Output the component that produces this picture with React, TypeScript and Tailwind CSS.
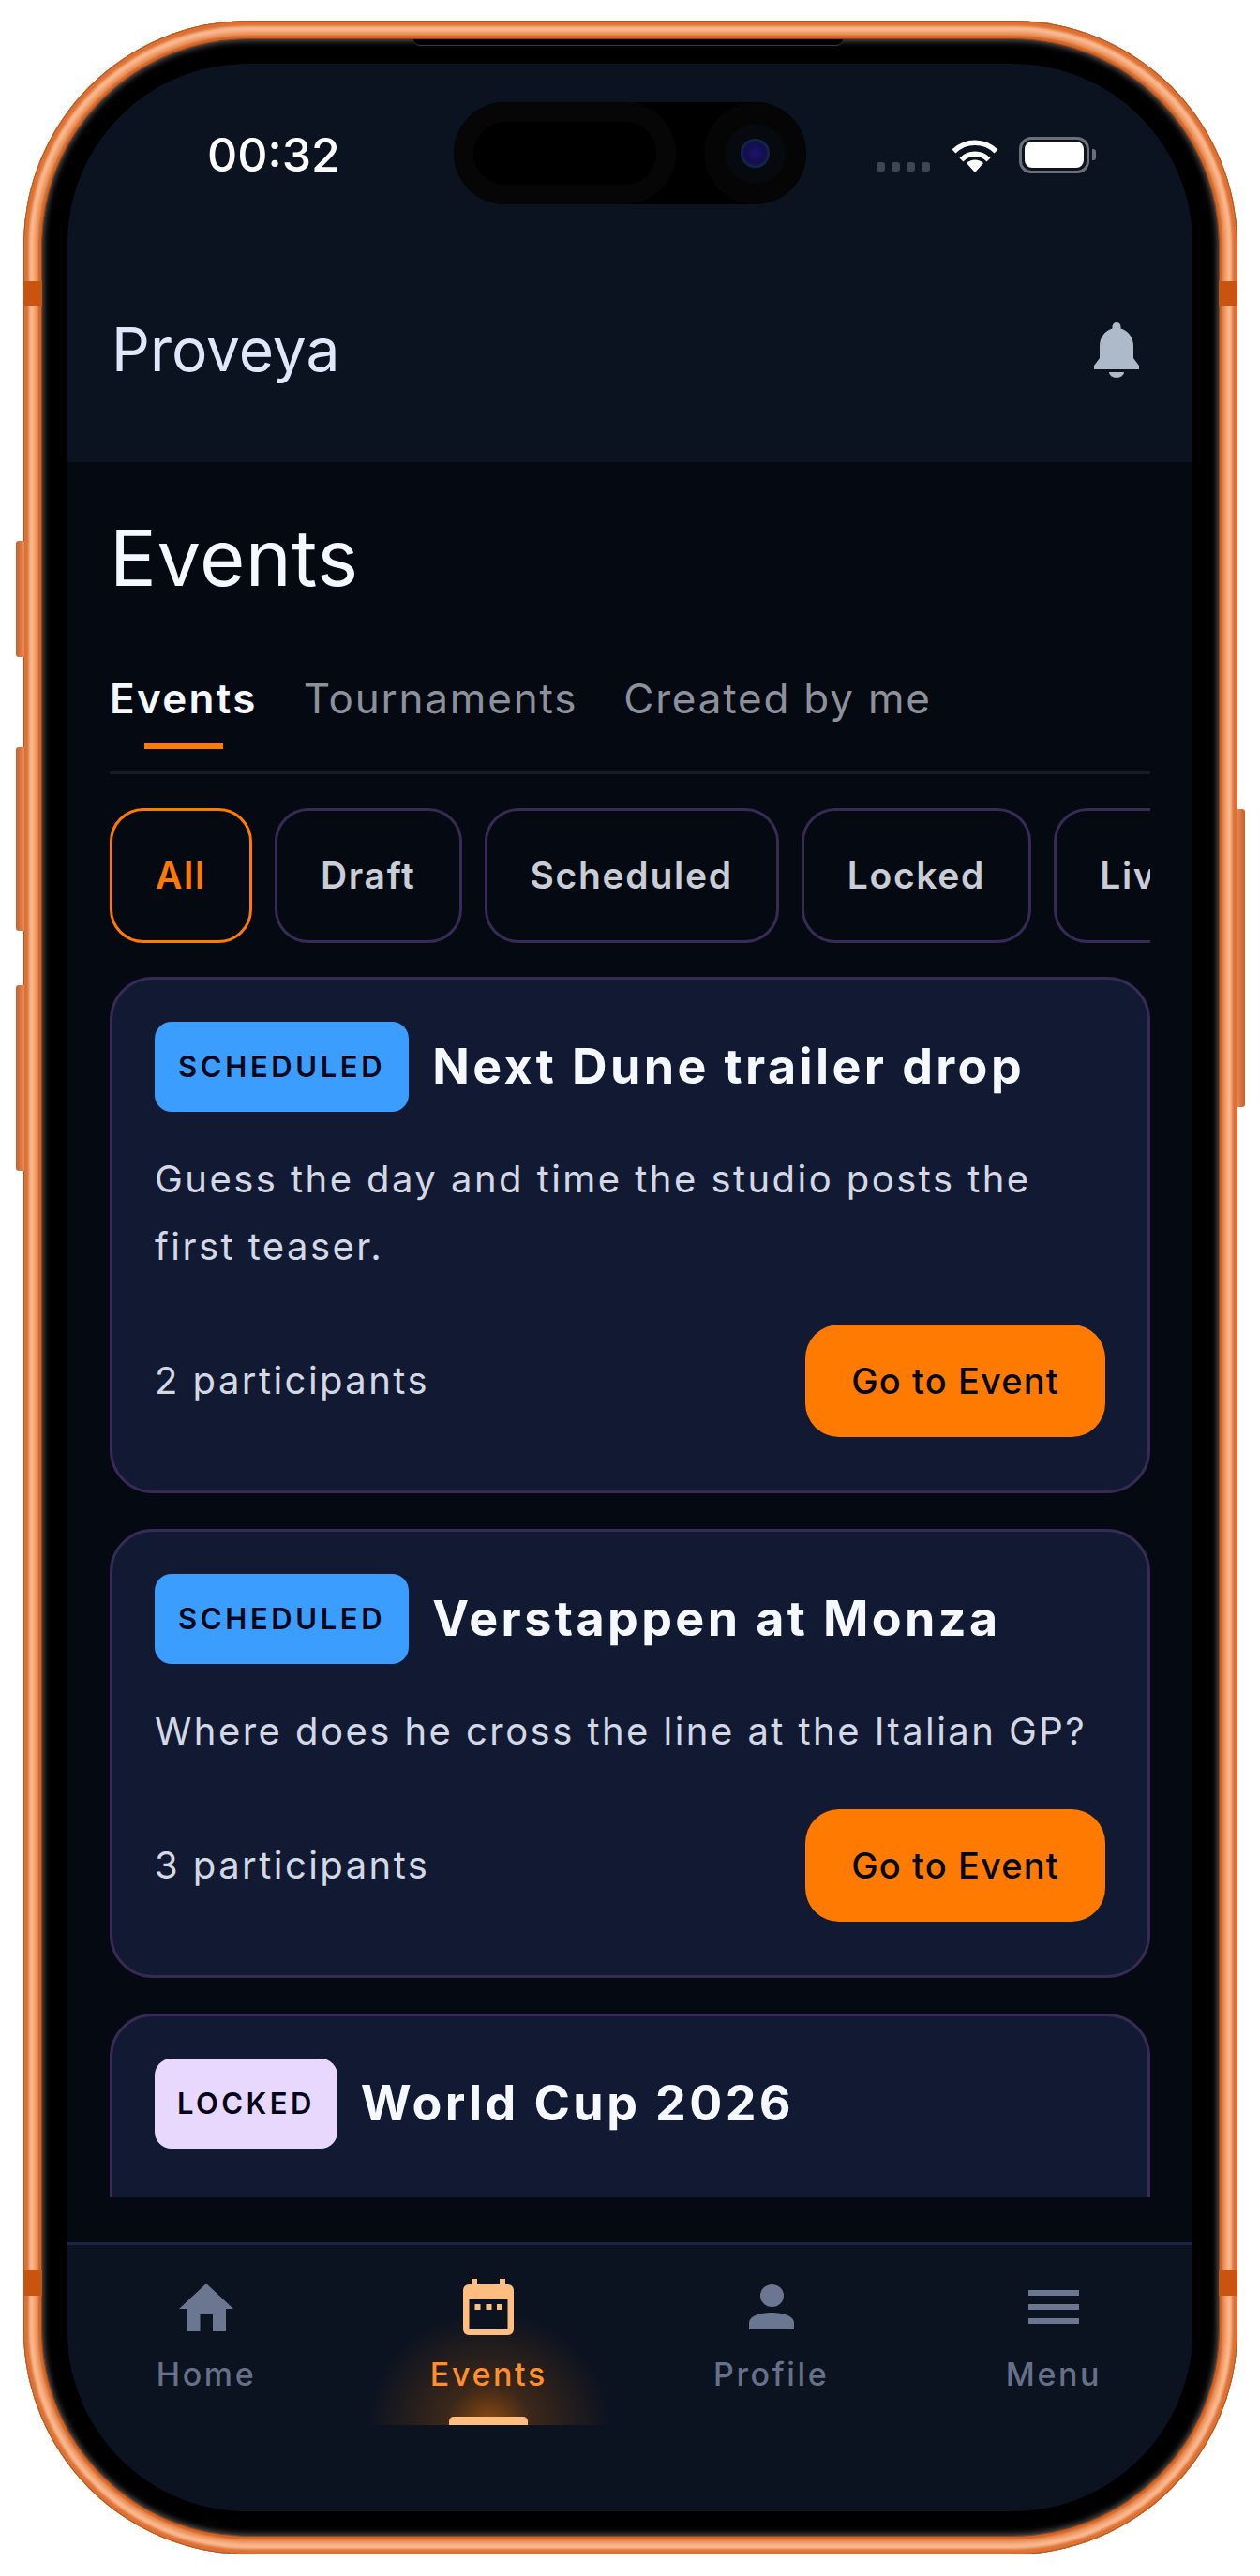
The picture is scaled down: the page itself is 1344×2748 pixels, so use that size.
import React from 'react';

const chips = ['All', 'Draft', 'Scheduled', 'Locked', 'Live'];

interface EventCard {
  status: string;
  statusClass: string;
  title: string;
  description?: string;
  participants?: string;
}

const events: EventCard[] = [
  {
    status: 'SCHEDULED',
    statusClass: 'bg-[#3b9eff] px-[25px] tracking-[3.600px]',
    title: 'Next Dune trailer drop',
    description: 'Guess the day and time the studio posts the first teaser.',
    participants: '2 participants',
  },
  {
    status: 'SCHEDULED',
    statusClass: 'bg-[#3b9eff] px-[25px] tracking-[3.600px]',
    title: 'Verstappen at Monza',
    description: 'Where does he cross the line at the Italian GP?',
    participants: '3 participants',
  },
  {
    status: 'LOCKED',
    statusClass: 'bg-[#e9d8fd] px-[24px] tracking-[3.400px]',
    title: 'World Cup 2026',
  },
];

function BellIcon() {
  return (
    <svg viewBox="0 0 48 59" className="h-[59px] w-[48px] fill-[#aeb9c9]">
      <path d="M24 0a4.5 4.5 0 0 1 4.5 4.5v2C36 9 42 15 42 25v13l6 8v4H0v-4l6-8V25C6 15 12 9 19.5 6.5v-2A4.5 4.5 0 0 1 24 0Z" />
      <path d="M16 53h16a8 6 0 0 1-16 0Z" />
    </svg>
  );
}

function WifiIcon() {
  return (
    <svg viewBox="0 0 50 37" className="h-[37px] w-[50px]" fill="none" stroke="#fff" strokeWidth="5.5">
      <path d="M2.5 14.5a32 32 0 0 1 45 0" />
      <path d="M10.5 23.5a20 20 0 0 1 29 0" />
      <path d="M25 37l-9-10a13 13 0 0 1 18 0Z" fill="#fff" stroke="none" />
    </svg>
  );
}

function HomeIcon() {
  return (
    <svg viewBox="0 0 58 51" className="h-[51px] w-[58px] fill-[#6b7690]">
      <path fillRule="evenodd" d="M29 0l29 27h-8v24H36V33H22.500v18H8V27H0Z" />
    </svg>
  );
}

function CalendarIcon() {
  return (
    <svg viewBox="0 0 54 60" className="h-[60px] w-[54px]">
      <path
        fill="#ffbd80"
        d="M9 0h6v6h24V0h6v6h3a6 6 0 0 1 6 6v42a6 6 0 0 1-6 6H6a6 6 0 0 1-6-6V12a6 6 0 0 1 6-6h3Z"
      />
      <rect x="6.500" y="21" width="41" height="33" rx="1" fill="#0c1320" />
      <rect x="12.500" y="27" width="6" height="6" fill="#ffbd80" />
      <rect x="24.500" y="27" width="6" height="6" fill="#ffbd80" />
      <rect x="36" y="27" width="6" height="6" fill="#ffbd80" />
    </svg>
  );
}

function ProfileIcon() {
  return (
    <svg viewBox="0 0 48 48" className="h-[48px] w-[48px] fill-[#6b7690]">
      <ellipse cx="24.500" cy="12" rx="12.500" ry="12" />
      <path d="M0 48v-7c0-7 11-11 24-11s24 4 24 11v7Z" />
    </svg>
  );
}

function MenuIcon() {
  return (
    <svg viewBox="0 0 54 36" className="h-[36px] w-[54px] fill-[#6b7690]">
      <rect y="0" width="54" height="6" />
      <rect y="15" width="54" height="6" />
      <rect y="30" width="54" height="6" />
    </svg>
  );
}

export default function App() {
  return (
    <div className="h-[2748px] overflow-hidden bg-white pl-[25px] pt-[22px] [font-family:Inter,sans-serif]">
      {/* Phone frame */}
      <div className="relative h-[2703px] w-[1295px] rounded-[240px] bg-[#e07f44] p-[20px] shadow-[inset_0_0_0_1px_#b8571f,inset_0_0_3px_6px_#dd7033,inset_0_0_4px_12px_#fbbd95,inset_0_0_2px_16px_#e88a50,inset_0_0_0_19px_#cf6428,inset_0_0_0_20px_#9c3e0e]">
        {/* Side buttons */}
        <div className="absolute left-[-8px] top-[555px] h-[124px] w-[9px] rounded-l-[3px] bg-gradient-to-r from-[#c95f28] to-[#e98a56]" />
        <div className="absolute left-[-8px] top-[775px] h-[196px] w-[9px] rounded-l-[3px] bg-gradient-to-r from-[#c95f28] to-[#e98a56]" />
        <div className="absolute left-[-8px] top-[1029px] h-[198px] w-[9px] rounded-l-[3px] bg-gradient-to-r from-[#c95f28] to-[#e98a56]" />
        <div className="absolute right-[-8px] top-[841px] h-[318px] w-[9px] rounded-r-[3px] bg-gradient-to-l from-[#c95f28] to-[#e98a56]" />
        {/* Antenna bands */}
        <div className="absolute left-0 top-[278px] h-[26px] w-[20px] bg-[#c9540f]" />
        <div className="absolute right-0 top-[278px] h-[26px] w-[20px] bg-[#c9540f]" />
        <div className="absolute bottom-[276px] left-0 h-[27px] w-[20px] bg-[#c9540f]" />
        <div className="absolute bottom-[276px] right-0 h-[27px] w-[20px] bg-[#c9540f]" />

        {/* Bezel */}
        <div className="relative h-full w-full rounded-[220px] bg-black pb-[26px] pl-[27px] pr-[28px] pt-[26px] shadow-[inset_0_0_7px_1px_rgba(170,170,170,0.6)]">
          <div className="absolute left-[396px] top-0 h-[7px] w-[458px] rounded-b-[8px] border-b border-[#3a3d40] bg-black" />

          {/* Screen */}
          <div className="relative flex h-full flex-col overflow-hidden rounded-[192px] bg-[#050912]">
            {/* Dynamic island */}
            <div className="absolute left-[412px] top-[41px] h-[109px] w-[376px] rounded-[55px] bg-black">
              <div className="absolute left-0 top-0 flex h-full w-[237px] items-center justify-center rounded-[55px] bg-[#060606]">
                <div className="h-[67px] w-[195px] rounded-[34px] bg-black" />
              </div>
              <div className="absolute right-0 top-0 flex h-full w-[109px] items-center justify-center rounded-full bg-[#050505]">
                <div className="flex h-[64px] w-[64px] items-center justify-center rounded-full bg-[#06090d]">
                  <div className="h-[31px] w-[31px] rounded-full bg-[radial-gradient(circle,#1c1470_0%,#140d4a_50%,#0d3a4a_78%,#06090d_100%)]" />
                </div>
              </div>
            </div>

            <header className="h-[425px] shrink-0 bg-[#0c1320] pt-[77px]">
              {/* Status bar */}
              <div className="flex h-[40px] items-center pl-[149px] pr-[103px]">
                <span className="text-[50px] font-medium leading-[40px] text-white">00:32</span>
                <div className="ml-auto flex items-center">
                  <div className="mr-[23px] mt-[26px] flex gap-[7px]">
                    <span className="h-[10px] w-[9px] rounded-[3px] bg-[#3f4653]" />
                    <span className="h-[10px] w-[9px] rounded-[3px] bg-[#3f4653]" />
                    <span className="h-[10px] w-[9px] rounded-[3px] bg-[#3f4653]" />
                    <span className="h-[10px] w-[9px] rounded-[3px] bg-[#3f4653]" />
                  </div>
                  <WifiIcon />
                  <div className="ml-[22px] flex h-[39px] w-[75px] items-center justify-center rounded-[13px] border-[3px] border-[#6b7078]">
                    <div className="h-[28px] w-[63px] rounded-[8px] bg-white" />
                  </div>
                  <div className="ml-[3px] h-[12px] w-[4px] rounded-r-[3px] bg-[#6b7078]" />
                </div>
              </div>
              {/* App bar */}
              <div className="mt-[153px] flex items-center justify-between pl-[47px] pr-[57px]">
                <span className="text-[64px] font-normal leading-[70px] text-[#dfe7fb]">Proveya</span>
                <BellIcon />
              </div>
            </header>

            <main className="flex min-h-0 flex-1 flex-col px-[45px] pb-[48px] pt-[52px]">
              <h1 className="text-[83px] font-normal leading-[100px] tracking-[0.5px] text-[#f5f8ff]">Events</h1>

              {/* Tabs */}
              <div className="mt-[70px] flex gap-[49px] border-b-[3px] border-[#171b25] pb-[48px] text-[44px] leading-[60px] tracking-[1.800px]">
                <div className="relative font-semibold tracking-[2.300px] text-[#f5f8ff]">
                  Events
                  <div className="absolute left-[37px] top-[78px] h-[6px] w-[84px] bg-[#ff7a00]" />
                </div>
                <div className="text-[#8d919c]">Tournaments</div>
                <div className="text-[#8d919c]">Created by me</div>
              </div>

              {/* Filter chips */}
              <div className="mt-[36px] flex shrink-0 gap-[24px] overflow-hidden">
                {chips.map((chip, i) => (
                  <div
                    key={chip}
                    className={
                      i === 0
                        ? 'flex h-[144px] shrink-0 items-center rounded-[36px] border-[3px] border-[#ff7a00] px-[46px] text-[39px] font-semibold tracking-[1.700px] text-[#ff7a00]'
                        : 'flex h-[144px] shrink-0 items-center rounded-[36px] border-[3px] border-[#372b55] px-[46px] text-[39px] font-semibold tracking-[1.700px] text-[#c9cdd6]'
                    }
                  >
                    {chip}
                  </div>
                ))}
              </div>

              {/* Event cards */}
              <div className="mt-[36px] flex min-h-0 flex-1 flex-col gap-[38px] overflow-hidden">
                {events.map(event => (
                  <div
                    key={event.title}
                    className={
                      event.description
                        ? 'shrink-0 rounded-[46px] border-[3px] border-[#372b55] bg-[#121a33] px-[45px] pb-[57px] pt-[45px]'
                        : 'min-h-[400px] shrink-0 rounded-[46px] border-[3px] border-[#372b55] bg-[#121a33] px-[45px] pb-[57px] pt-[45px]'
                    }
                  >
                    <div className="flex items-center gap-[25px]">
                      <span
                        className={`flex h-[96px] items-center rounded-[18px] text-[31px] font-semibold text-[#020617] ${event.statusClass}`}
                      >
                        {event.status}
                      </span>
                      <span className="text-[52px] font-bold leading-[64px] tracking-[3.400px] text-[#f5f8ff]">
                        {event.title}
                      </span>
                    </div>
                    {event.description && (
                      <p className="mt-[36px] text-[40px] leading-[72px] tracking-[2.450px] text-[#d3d8e4]">
                        {event.description}
                      </p>
                    )}
                    {event.participants && (
                      <div className="mt-[47px] flex items-center justify-between">
                        <span className="text-[40px] tracking-[2.450px] text-[#d3d8e4]">{event.participants}</span>
                        <button className="flex h-[120px] w-[320px] items-center justify-center rounded-[36px] bg-[#ff7a00] text-[38px] font-medium tracking-[1.100px] text-[#020617]">
                          Go to Event
                        </button>
                      </div>
                    )}
                  </div>
                ))}
              </div>
            </main>

            {/* Bottom navigation */}
            <nav className="flex h-[287px] shrink-0 justify-between border-t-[3px] border-[#1c2540] bg-[#0c1320] pl-[88px] pr-[88px] pt-[36px]">
              <div className="flex w-[120px] flex-col items-center">
                <div className="flex h-[60px] items-center">
                  <HomeIcon />
                </div>
                <span className="mt-[20px] text-[34px] font-medium leading-[44px] tracking-[2.600px] text-[#667088]">Home</span>
              </div>
              <div className="relative flex w-[120px] flex-col items-center">
                <div className="absolute bottom-[92px] left-[-68px] h-[120px] w-[257px] bg-[radial-gradient(ellipse_128px_120px_at_50%_100%,rgba(255,122,0,0.55)_0%,rgba(255,122,0,0.2)_35%,rgba(255,122,0,0.09)_70%,rgba(255,122,0,0)_100%)]" />
                <div className="relative flex h-[60px] items-center">
                  <CalendarIcon />
                </div>
                <span className="relative mt-[20px] text-[34px] font-medium leading-[44px] tracking-[2.600px] text-[#ff8f2b]">Events</span>
                <div className="relative mt-[23px] h-[9px] w-[84px] rounded-t-[5px] bg-[#ffbd80]" />
              </div>
              <div className="flex w-[120px] flex-col items-center">
                <div className="flex h-[60px] items-center">
                  <ProfileIcon />
                </div>
                <span className="mt-[20px] text-[34px] font-medium leading-[44px] tracking-[2.600px] text-[#667088]">Profile</span>
              </div>
              <div className="flex w-[120px] flex-col items-center">
                <div className="flex h-[60px] items-center">
                  <MenuIcon />
                </div>
                <span className="mt-[20px] text-[34px] font-medium leading-[44px] tracking-[2.600px] text-[#667088]">Menu</span>
              </div>
            </nav>
          </div>
        </div>
      </div>
    </div>
  );
}
